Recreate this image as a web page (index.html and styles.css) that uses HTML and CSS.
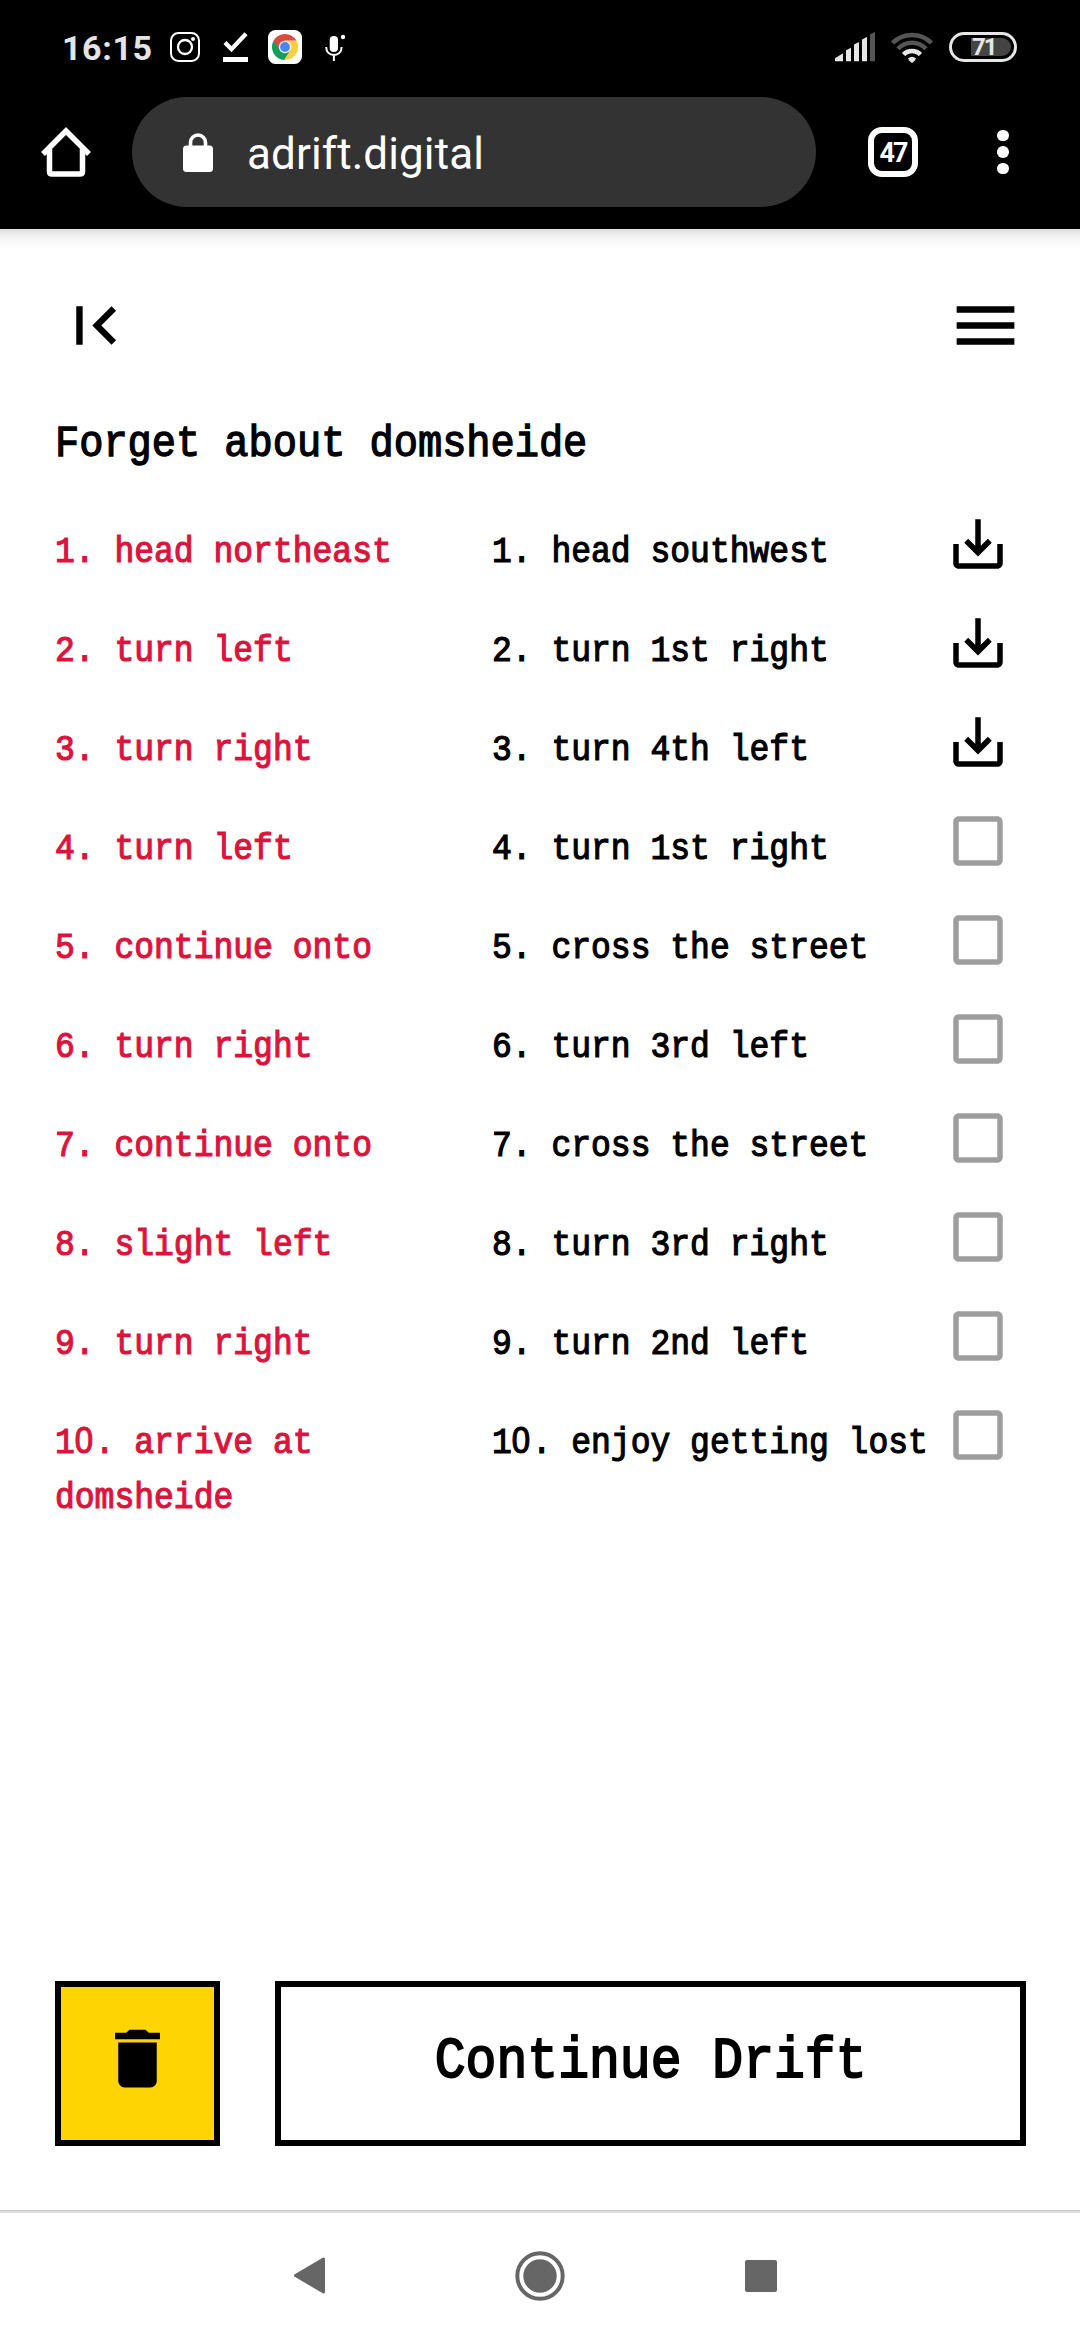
FILE: index.html
```html
<!DOCTYPE html>
<html lang="en">
<head>
<meta charset="utf-8">
<title>adrift.digital</title>
<link rel="stylesheet" href="styles.css">
</head>
<body>
<svg class="sprite" aria-hidden="true">
  <symbol id="save" viewBox="0 0 24 24"><path d="M19 12v7H5v-7H3v7c0 1.1.9 2 2 2h14c1.1 0 2-.9 2-2v-7h-2zm-6 .67l2.59-2.58L17 11.5l-5 5-5-5 1.41-1.41L11 12.67V3h2z"/></symbol>
  <symbol id="box" viewBox="0 0 24 24"><path d="M19 5v14H5V5h14m0-2H5c-1.1 0-2 .9-2 2v14c0 1.1.9 2 2 2h14c1.1 0 2-.9 2-2V5c0-1.1-.9-2-2-2z"/></symbol>
</svg>
<header class="chrome">
  <div class="status">
    <span class="clock">16:15</span>
    <svg class="insta" width="30" height="30" viewBox="0 0 30 30" fill="none" stroke="#fff"><rect x="1" y="1" width="28" height="28" rx="7.5" stroke-width="2"/><circle cx="15" cy="15" r="7" stroke-width="2.3"/><circle cx="23" cy="7" r="2" fill="#fff" stroke="none"/></svg>
    <svg class="check" width="25" height="30" viewBox="0 0 25 30"><path d="M2 10.5l6.5 6.7L23 1.8" fill="none" stroke="#fff" stroke-width="4.3"/><path d="M0 25h25v5H0z" fill="#fff"/></svg>
    <svg class="chrome-icon" width="34" height="34" viewBox="0 0 34 34"><rect width="34" height="34" rx="7.5" fill="#fff"/><path d="M17 17L5.7 10.5A13 13 0 0 0 16.3 30l6.3-9.7z" fill="#139e5a"/><path d="M17 10.5h11.3A13 13 0 0 1 16.3 30L22.6 20z" fill="#ffcd40"/><path d="M17 10.5h11.3A13 13 0 0 0 5.7 10.500L11 19z" fill="#db4a3f"/><circle cx="17" cy="17" r="6.2" fill="#f4f4f4"/><circle cx="17" cy="17" r="4.9" fill="#4a86f4"/></svg>
    <svg class="mic" width="21" height="27" viewBox="0 0 21 27"><rect x="4.7" y="2" width="8.3" height="16" rx="4.1" fill="#fff"/><path d="M1.2 13c0 5 3.3 8 7.7 8s7.7-3 7.7-8M8.9 21v6" fill="none" stroke="#fff" stroke-width="2"/><circle cx="18" cy="3" r="2.2" fill="#fff"/></svg>
    <svg class="signal" width="40" height="30" viewBox="0 0 40 30" fill="#e6e6e6"><path d="M0 29.3v-3l8-5v8zM11 29.3v-11l5-2.5v13.5zM19 29.3V12.5l5-2.5v19.3zM27 29.3V7.5L32 5v24.3z"/><path d="M35 29.3V2.3L40 0v29.3z" fill="#555"/></svg>
    <svg class="wifi" width="42" height="31" viewBox="0 0 42 31" fill="none" stroke-width="4.5"><path d="M1.5 11a27.500 27.500 0 0 1 39 0M7 16.8a19.500 19.500 0 0 1 28 0" stroke="#555"/><path d="M12.5 22.5a12 12 0 0 1 17 0" stroke="#e6e6e6"/><path d="M17 26.5q4-3.500 8 0-1 3-4 4.500-3-1.500-4-4.500z" fill="#e6e6e6"/></svg>
    <div class="battery"><span class="level">71</span></div>
  </div>
  <div class="toolbar">
    <svg class="home" width="50" height="50" viewBox="0 0 50 50" fill="none" stroke="#fff" stroke-linejoin="round"><path d="M8.500 22v22.500q0 2.500 2.500 2.500h28q2.500 0 2.500-2.500V22" stroke-width="5.500"/><path d="M2 27L25 4l23 23" stroke-width="5.500" stroke-linejoin="miter"/></svg>
    <div class="omnibox">
      <svg width="30" height="39" viewBox="0 0 30 39"><rect y="12.500" width="30" height="26.500" rx="3.500" fill="#fff"/><path d="M7.500 15V9.500a7.500 7.500 0 0 1 15 0V15" fill="none" stroke="#fff" stroke-width="3.600"/></svg>
      <span class="url">adrift.digital</span>
    </div>
    <div class="tabs">47</div>
    <div class="more"><i></i><i></i><i></i></div>
  </div>
</header>
<main class="page">
  <nav class="topbar">
    <svg viewBox="0 0 24 24"><path d="M18.410 16.590L13.820 12l4.590-4.590L17 6l-6 6 6 6zM6 6h2v12H6z"/></svg>
    <svg viewBox="0 0 24 24"><path d="M3 18h18v-2H3v2zm0-5h18v-2H3v2zm0-7v2h18V6H3z"/></svg>
  </nav>
  <h1 class="title">Forget about domsheide</h1>
  <div class="steps">
    <div class="step"><p class="old">1. head northeast</p><p>1. head southwest</p><svg><use href="#save"/></svg></div>
    <div class="step"><p class="old">2. turn left</p><p>2. turn 1st right</p><svg><use href="#save"/></svg></div>
    <div class="step"><p class="old">3. turn right</p><p>3. turn 4th left</p><svg><use href="#save"/></svg></div>
    <div class="step"><p class="old">4. turn left</p><p>4. turn 1st right</p><svg class="todo"><use href="#box"/></svg></div>
    <div class="step"><p class="old">5. continue onto</p><p>5. cross the street</p><svg class="todo"><use href="#box"/></svg></div>
    <div class="step"><p class="old">6. turn right</p><p>6. turn 3rd left</p><svg class="todo"><use href="#box"/></svg></div>
    <div class="step"><p class="old">7. continue onto</p><p>7. cross the street</p><svg class="todo"><use href="#box"/></svg></div>
    <div class="step"><p class="old">8. slight left</p><p>8. turn 3rd right</p><svg class="todo"><use href="#box"/></svg></div>
    <div class="step"><p class="old">9. turn right</p><p>9. turn 2nd left</p><svg class="todo"><use href="#box"/></svg></div>
    <div class="step"><p class="old">1<span class="zero">0</span>. arrive at<br>domsheide</p><p>1<span class="zero">0</span>. enjoy getting lost</p><svg class="todo"><use href="#box"/></svg></div>
  </div>
  <div class="actions">
    <div class="delete"><svg viewBox="0 0 24 24"><path d="M6 19c0 1.100.9 2 2 2h8c1.100 0 2-.9 2-2V7H6v12zM19 4h-3.500l-1-1h-5l-1 1H5v2h14V4z"/></svg></div>
    <div class="continue"><span>Continue Drift</span></div>
  </div>
</main>
<footer class="sysnav">
  <svg class="back" width="31" height="37" viewBox="0 0 31 37"><path d="M1.500 18.500L29.500 2v33z" fill="#666" stroke="#666" stroke-width="3" stroke-linejoin="round"/></svg>
  <svg class="circle" width="50" height="50" viewBox="0 0 50 50"><circle cx="25" cy="25" r="22.700" fill="none" stroke="#666" stroke-width="4"/><circle cx="25" cy="25" r="16.700" fill="#666"/></svg>
  <div class="recent"></div>
</footer>
</body>
</html>
```

FILE: styles.css
```css
* { box-sizing: border-box; }
body {
  margin: 0;
  width: 1080px;
  height: 2340px;
  display: flex;
  flex-direction: column;
  background: #fff;
  color: #000;
  overflow: hidden;
}
svg { display: block; flex: none; }
.sprite { display: none; }

/* browser chrome */
.chrome {
  height: 229px;
  background: #000;
  color: #fff;
  font-family: Roboto, sans-serif;
}
.status {
  height: 94px;
  padding: 0 63px 0 62px;
  display: flex;
  align-items: center;
}
.clock {
  width: 108px;
  font-size: 34px;
  font-weight: 700;
  line-height: 40px;
  letter-spacing: 0.6px;
  color: #e4e4e4;
  padding-top: 2px;
}
.check { margin-left: 23px; }
.chrome-icon { margin-left: 20px; }
.mic { margin-left: 23px; }
.signal { margin-left: auto; }
.wifi { margin-left: 16px; }
.battery {
  width: 68px;
  height: 30px;
  margin-left: 16px;
  border: 3px solid #e6e6e6;
  border-radius: 15px;
  padding: 3px;
  display: flex;
  justify-content: flex-end;
}
.level {
  width: 40px;
  height: 18px;
  padding-left: 1px;
  border-radius: 0 9px 9px 0;
  background: #444;
  color: #e6e6e6;
  font-size: 24px;
  font-weight: 700;
  line-height: 19px;
  letter-spacing: -2px;
}
.toolbar {
  height: 116px;
  padding: 3px 71px 3px 41px;
  display: flex;
  align-items: center;
}
.omnibox {
  width: 684px;
  height: 110px;
  margin-left: 41px;
  padding-left: 51px;
  border-radius: 55px;
  background: #333;
  display: flex;
  align-items: center;
  gap: 34px;
}
.url { font-size: 44px; line-height: 52px; padding-top: 3px; letter-spacing: 0.1px; }
.tabs {
  width: 50px;
  height: 50px;
  margin-left: 52px;
  border: 6px solid #fff;
  border-radius: 14px;
  font-size: 27px;
  font-weight: 700;
  line-height: 40px;
  text-align: center;
  letter-spacing: -2px;
}
.more {
  margin-left: auto;
  display: flex;
  flex-direction: column;
  gap: 5px;
}
.more i { width: 11.600px; height: 11.600px; border-radius: 50%; background: #fff; }

/* page */
.page {
  height: 1981px;
  padding: 58px 54px 64px 55px;
  display: flex;
  flex-direction: column;
  background: linear-gradient(#dedede 0, #f0f0f0 6px, #f8f8f8 12px, #fff 21px);
  font-family: "Liberation Mono", monospace;
}
.topbar {
  display: flex;
  justify-content: space-between;
  padding: 0 2px;
}
.topbar svg { width: 77px; height: 77px; }
.title {
  margin: 50px 0 35px;
  font-size: 45px;
  font-weight: 400;
  line-height: 62px;
  white-space: nowrap;
  transform: scaleX(0.896);
  transform-origin: left;
  -webkit-text-stroke: 1.400px;
}
.steps { display: grid; grid-auto-rows: 99px; }
.step {
  display: grid;
  grid-template-columns: 437px 453px 66px;
  align-items: start;
}
.step p {
  margin: 14px 0 0;
  font-size: 36px;
  line-height: 55px;
  transform: scaleX(0.917);
  transform-origin: left;
  -webkit-text-stroke: 1.200px;
}
.step p + p { white-space: nowrap; }
.step .old { color: #dc143c; }
.step svg { width: 66px; height: 66px; }
.step .todo { fill: #9e9e9e; }
.zero { font-family: "Liberation Sans", sans-serif; line-height: 1; letter-spacing: 0.044em; }
.actions {
  margin-top: auto;
  display: flex;
  gap: 55px;
}
.delete, .continue {
  height: 165px;
  border: 6px solid #000;
  display: flex;
  justify-content: center;
}
.delete { width: 165px; padding-top: 33px; background: #ffd403; }
.delete svg { width: 77px; height: 77px; }
.continue { flex: 1; background: #fff; }
.continue span {
  font-size: 58px;
  line-height: 149px;
  white-space: nowrap;
  transform: scaleX(0.886);
  -webkit-text-stroke: 2px;
}

/* system navigation */
.sysnav {
  height: 130px;
  border-top: 1px solid #c0c0c0;
  box-shadow: inset 0 2px #e0e0e0;
  padding: 0 303px 0 294px;
  display: flex;
  align-items: center;
  background: #fff;
}
.circle { margin-left: 189.500px; }
.recent { width: 32px; height: 32px; margin-left: auto; border-radius: 2px; background: #666; }
```
